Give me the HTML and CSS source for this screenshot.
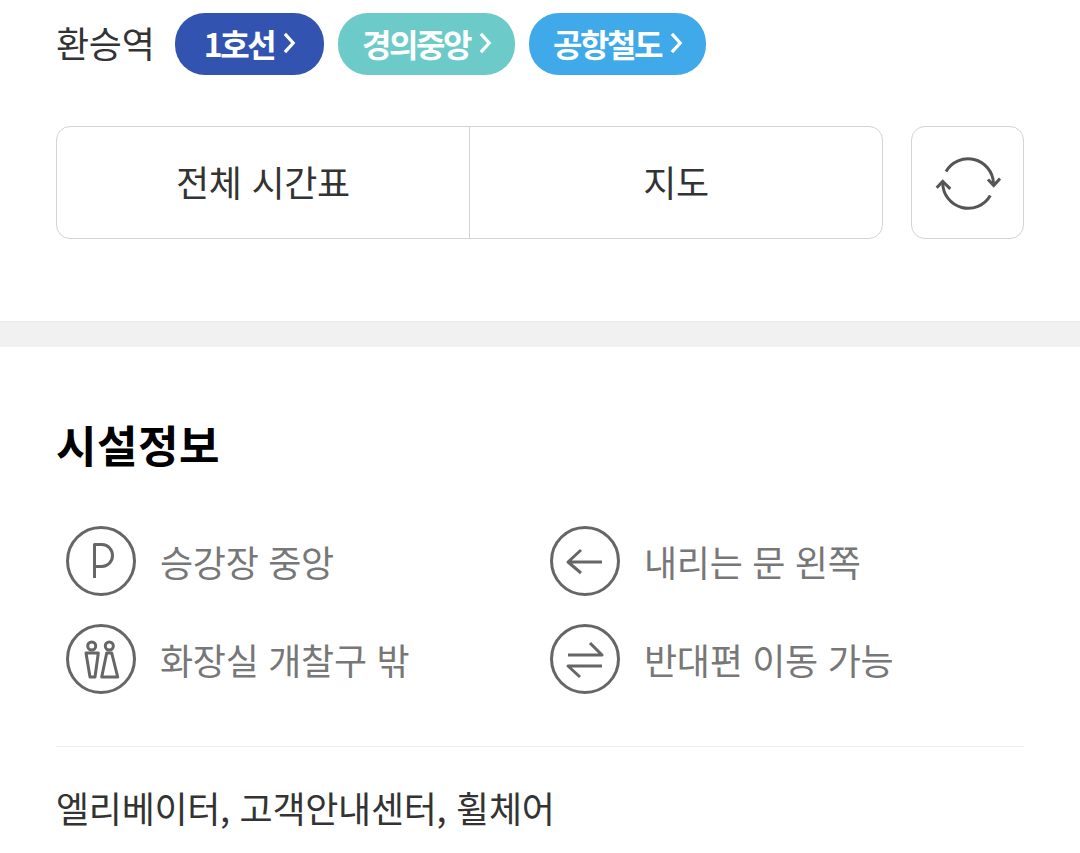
FILE: index.html
```html
<!DOCTYPE html>
<html lang="ko">
<head>
    <meta charset="UTF-8">
    <meta name="viewport" content="width=device-width, initial-scale=1.0">
    <title>시설정보</title>
    <link rel="stylesheet" href="styles.css">
</head>
<body>
    <section class="top">
        <div class="transfer">
            <span class="transfer-label">환승역</span>
            <a class="line line-1">1호선<svg class="chev" viewBox="0 0 14 24"><path d="M2 2l9 10-9 10"/></svg></a>
            <a class="line line-gj">경의중앙<svg class="chev" viewBox="0 0 14 24"><path d="M2 2l9 10-9 10"/></svg></a>
            <a class="line line-air">공항철도<svg class="chev" viewBox="0 0 14 24"><path d="M2 2l9 10-9 10"/></svg></a>
        </div>
        <div class="actions">
            <div class="btn-group">
                <button class="btn">전체 시간표</button>
                <button class="btn">지도</button>
            </div>
            <button class="refresh" aria-label="새로고침">
                <svg viewBox="0 0 66 56" width="66" height="56">
                    <path d="M11 16.500A25.500 25.500 0 0 1 58.500 28"/>
                    <path d="M53 24.500L58.700 30.500L65 23.500"/>
                    <path d="M55.300 40.500A25.500 25.500 0 0 1 7.700 28"/>
                    <path d="M1.700 32.800L7.700 26.500L15.300 33.800"/>
                </svg>
            </button>
        </div>
    </section>
    <div class="band"></div>
    <section class="facility">
        <h2>시설정보</h2>
        <ul class="info">
            <li>
                <svg class="ico" viewBox="0 0 70 70"><circle cx="35" cy="35" r="33.500"/><path d="M28.500 52V18.500H36A10.500 11 0 0 1 36 40.500H28.500"/></svg>
                <span>승강장 중앙</span>
            </li>
            <li>
                <svg class="ico" viewBox="0 0 70 70"><circle cx="35" cy="35" r="33.500"/><path d="M18 36H52M31 24L18 36L31 47"/></svg>
                <span>내리는 문 왼쪽</span>
            </li>
            <li>
                <svg class="ico" viewBox="0 0 70 70"><circle cx="35" cy="35" r="33.500"/><circle cx="25.700" cy="22" r="4"/><circle cx="43.300" cy="22" r="4"/><path d="M20 29H32.300L29 53H24Z"/><path d="M40.700 29H45.700L51.700 53H35.700Z"/></svg>
                <span>화장실 개찰구 밖</span>
            </li>
            <li>
                <svg class="ico" viewBox="0 0 70 70"><circle cx="35" cy="35" r="33.500"/><path d="M18 31H52L40 19M52 42H18L30 53"/></svg>
                <span>반대편 이동 가능</span>
            </li>
        </ul>
        <p class="extra">엘리베이터, 고객안내센터, 휠체어</p>
    </section>
</body>
</html>
```

FILE: styles.css
```css
body {
    margin: 0;
    padding: 0;
    background-color: #fff;
    color: #333;
    font-family: "Noto Sans CJK KR", "Noto Sans", sans-serif;
    font-size: 36px;
    letter-spacing: -0.3px;
    overflow: hidden;
}
.top {
    padding: 13px 56px 82px;
}
.transfer {
    display: flex;
    align-items: center;
    height: 62px;
}
.transfer-label {
    margin-right: 21px;
    padding-bottom: 4px;
}
.line {
    display: flex;
    align-items: center;
    justify-content: center;
    gap: 9px;
    height: 60px;
    padding-bottom: 2px;
    border-radius: 30px;
    color: #fff;
    font-size: 32px;
    font-weight: 700;
    letter-spacing: -2.5px;
    margin-right: 14px;
}
.line-1 {
    width: 149px;
    background-color: #3254b0;
}
.line-gj {
    width: 177px;
    background-color: #6ccbc8;
}
.line-air {
    width: 177px;
    background-color: #3fa9ea;
}
.chev {
    width: 13px;
    height: 22px;
}
.chev path {
    fill: none;
    stroke: #fff;
    stroke-width: 3.500;
}
.actions {
    display: flex;
    gap: 28px;
    margin-top: 51px;
}
.btn-group {
    display: flex;
    width: 827px;
    height: 113px;
    box-sizing: border-box;
    border: 1px solid #d4d4d4;
    border-radius: 14px;
}
.btn {
    flex: 1;
    padding: 0 0 4px;
    border: 0;
    background: none;
    color: #333;
    font: inherit;
    letter-spacing: inherit;
}
.btn + .btn {
    border-left: 1px solid #d4d4d4;
}
.refresh {
    display: flex;
    align-items: center;
    justify-content: center;
    width: 113px;
    height: 113px;
    padding: 0;
    box-sizing: border-box;
    border: 1px solid #d4d4d4;
    border-radius: 14px;
    background: none;
}
.refresh path {
    fill: none;
    stroke: #555;
    stroke-width: 3;
}
.band {
    height: 25px;
    background-color: #f1f1f1;
    border-top: 1px solid #e9e9e9;
}
.facility {
    padding: 0 56px;
}
.facility h2 {
    margin: 65px 0 0;
    height: 64px;
    color: #000;
    font-size: 44px;
    font-weight: 700;
    letter-spacing: 0.5px;
    line-height: 64px;
}
.info {
    display: grid;
    grid-template-columns: 484px 1fr;
    row-gap: 28px;
    margin: 50px 0 0;
    padding: 0 0 52px 10px;
    list-style: none;
    border-bottom: 1px solid #eee;
    color: #777;
}
.info li {
    display: flex;
    align-items: center;
    gap: 24px;
}
.ico {
    width: 70px;
    height: 70px;
    flex: none;
    fill: none;
    stroke: #666;
    stroke-width: 3;
    stroke-linejoin: round;
}
.extra {
    margin: 34px 0 0;
    line-height: 52px;
}
```
